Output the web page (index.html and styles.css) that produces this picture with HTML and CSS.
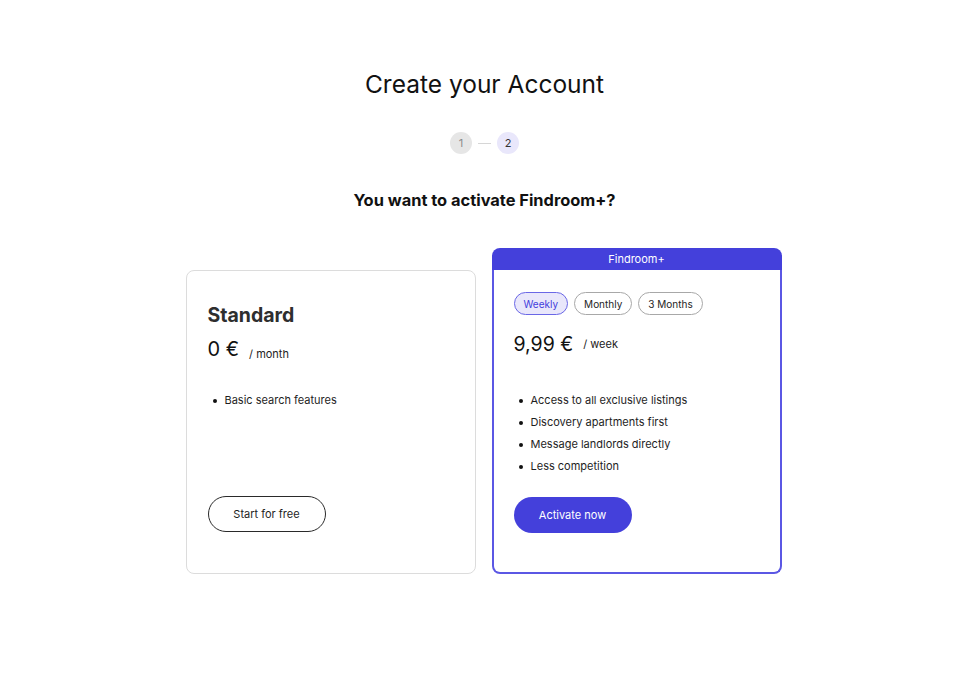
FILE: index.html
```html
<!DOCTYPE html>
<html lang="en">
<head>
<meta charset="utf-8">
<title>Create your Account</title>
<link rel="stylesheet" href="styles.css">
</head>
<body>
<main class="page">
  <h1 class="title">Create your Account</h1>
  <div class="steps">
    <span class="step step-done">1</span>
    <span class="step-line"></span>
    <span class="step step-active">2</span>
  </div>
  <h2 class="question">You want to activate Findroom+?</h2>
  <div class="plans">
    <section class="card card-standard">
      <h3 class="plan-name">Standard</h3>
      <div class="price price-standard"><span class="amount">0 €</span><span class="period">/ month</span></div>
      <ul class="features features-standard">
        <li>Basic search features</li>
      </ul>
      <button class="btn btn-outline">Start for free</button>
    </section>
    <section class="card-plus">
      <div class="plus-header">Findroom+</div>
      <div class="plus-body">
        <div class="tabs">
          <span class="tab tab-active">Weekly</span>
          <span class="tab">Monthly</span>
          <span class="tab">3 Months</span>
        </div>
        <div class="price price-plus"><span class="amount">9,99 €</span><span class="period">/ week</span></div>
        <ul class="features features-plus">
          <li>Access to all exclusive listings</li>
          <li>Discovery apartments first</li>
          <li>Message landlords directly</li>
          <li>Less competition</li>
        </ul>
        <button class="btn btn-primary">Activate now</button>
      </div>
    </section>
  </div>
</main>
</body>
</html>
```

FILE: styles.css
```css
* { box-sizing: border-box; }
html, body { margin: 0; padding: 0; background: #fff; }
body {
  font-family: Inter, "Noto Sans", "Liberation Sans", sans-serif;
  color: #222;
}
.page {
  display: flex;
  flex-direction: column;
  align-items: center;
  padding-top: 69px;
}
.title {
  margin: 0;
  font-size: 24.5px;
  line-height: 30px;
  font-weight: 400;
  color: #111;
  transform: translateX(-2px);
}
.steps {
  margin-top: 33px;
  display: flex;
  align-items: center;
  gap: 6px;
  transform: translateX(-2px);
}
.step {
  width: 22px;
  height: 22px;
  border-radius: 50%;
  display: flex;
  align-items: center;
  justify-content: center;
  font-size: 11px;
}
.step-done { background: #e6e6e6; color: #8a8a8a; }
.step-active { background: #e9e7fb; color: #333; }
.step-line { width: 13px; height: 1px; background: #d6d6d6; }
.question {
  margin: 36px 0 0;
  font-size: 16.4px;
  line-height: 20px;
  font-weight: 700;
  color: #111;
  transform: translateX(-2px);
}
.plans {
  margin-top: 38px;
  display: flex;
  align-items: flex-end;
  gap: 16px;
  transform: translateX(-3px);
}
.card {
  width: 290px;
  height: 304px;
  border: 1px solid #dcdcdc;
  border-radius: 8px;
  padding: 21px 21px 41px;
  display: flex;
  flex-direction: column;
  align-items: flex-start;
}
.plan-name {
  margin: 11px 0 0;
  font-size: 19.5px;
  line-height: 24px;
  font-weight: 700;
  color: #2e2e2e;
}
.price {
  display: flex;
}
.price .amount { font-size: 20px; line-height: 24px; color: #111; }
.price .period { font-size: 11px; color: #222; }
.price-standard { margin-top: 10px; align-items: flex-end; gap: 10px; }
.price-plus { margin-top: 17px; align-items: center; gap: 10px; }
.price-plus .amount { font-size: 19.5px; }
.features {
  list-style: none;
  margin: 0;
  padding: 0;
}
.features li {
  position: relative;
  padding-left: 17px;
  font-size: 11px;
  line-height: 22px;
  color: #1e1e1e;
}
.features li::before {
  content: "";
  position: absolute;
  left: 5px;
  top: 10px;
  width: 4px;
  height: 4px;
  border-radius: 50%;
  background: #111;
}
.features-standard { margin-top: 28px; }
.features-plus { margin-top: 33px; }
.btn {
  margin-top: auto;
  width: 118px;
  height: 36px;
  border-radius: 18px;
  font-family: inherit;
  font-size: 11px;
  cursor: pointer;
}
.btn-outline { background: #fff; border: 1px solid #2a2a2a; color: #1e1e1e; }
.btn-primary { background: #4440db; border: none; color: #fff; }
.card-plus {
  width: 290px;
  display: flex;
  flex-direction: column;
}
.plus-header {
  height: 22px;
  background: #4440db;
  border-radius: 8px 8px 0 0;
  color: #fff;
  font-size: 11px;
  display: flex;
  align-items: center;
  justify-content: center;
}
.plus-body {
  height: 304px;
  border: 2px solid #5b57e4;
  border-top: none;
  border-radius: 0 0 8px 8px;
  padding: 22px 20px 39px;
  display: flex;
  flex-direction: column;
  align-items: flex-start;
}
.tabs { display: flex; gap: 6px; }
.tab {
  height: 23px;
  padding: 0 9px;
  border: 1px solid #a8a8a8;
  border-radius: 12px;
  font-size: 10px;
  display: flex;
  align-items: center;
  color: #1e1e1e;
}
.tab-active {
  background: #e9e7fb;
  border-color: #6a67e6;
  color: #4440db;
}
```
